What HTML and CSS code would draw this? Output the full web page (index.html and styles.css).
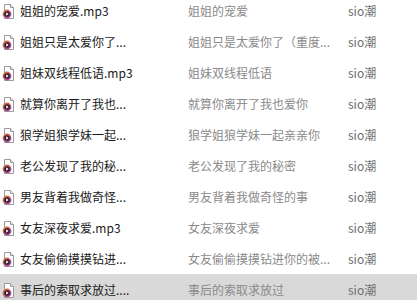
FILE: index.html
```html
<!DOCTYPE html>
<html>
<head>
    <meta charset="utf-8">
    <title>音频列表</title>
    <link rel="stylesheet" href="styles.css">
</head>
<body>
    <div class="list">
        <div class="row">
            <span class="icon"><svg width="16" height="16" viewBox="0 0 16 16"><use href="#audio"/></svg></span>
            <span class="name">姐姐的宠爱.mp3</span>
            <span class="desc">姐姐的宠爱</span>
            <span class="author">sio潮</span>
        </div>
        <div class="row">
            <span class="icon"><svg width="16" height="16" viewBox="0 0 16 16"><use href="#audio"/></svg></span>
            <span class="name">姐姐只是太爱你了...</span>
            <span class="desc">姐姐只是太爱你了（重度...</span>
            <span class="author">sio潮</span>
        </div>
        <div class="row">
            <span class="icon"><svg width="16" height="16" viewBox="0 0 16 16"><use href="#audio"/></svg></span>
            <span class="name">姐妹双线程低语.mp3</span>
            <span class="desc">姐妹双线程低语</span>
            <span class="author">sio潮</span>
        </div>
        <div class="row">
            <span class="icon"><svg width="16" height="16" viewBox="0 0 16 16"><use href="#audio"/></svg></span>
            <span class="name">就算你离开了我也...</span>
            <span class="desc">就算你离开了我也爱你</span>
            <span class="author">sio潮</span>
        </div>
        <div class="row">
            <span class="icon"><svg width="16" height="16" viewBox="0 0 16 16"><use href="#audio"/></svg></span>
            <span class="name">狼学姐狼学妹一起...</span>
            <span class="desc">狼学姐狼学妹一起亲亲你</span>
            <span class="author">sio潮</span>
        </div>
        <div class="row">
            <span class="icon"><svg width="16" height="16" viewBox="0 0 16 16"><use href="#audio"/></svg></span>
            <span class="name">老公发现了我的秘...</span>
            <span class="desc">老公发现了我的秘密</span>
            <span class="author">sio潮</span>
        </div>
        <div class="row">
            <span class="icon"><svg width="16" height="16" viewBox="0 0 16 16"><use href="#audio"/></svg></span>
            <span class="name">男友背着我做奇怪...</span>
            <span class="desc">男友背着我做奇怪的事</span>
            <span class="author">sio潮</span>
        </div>
        <div class="row">
            <span class="icon"><svg width="16" height="16" viewBox="0 0 16 16"><use href="#audio"/></svg></span>
            <span class="name">女友深夜求爱.mp3</span>
            <span class="desc">女友深夜求爱</span>
            <span class="author">sio潮</span>
        </div>
        <div class="row">
            <span class="icon"><svg width="16" height="16" viewBox="0 0 16 16"><use href="#audio"/></svg></span>
            <span class="name">女友偷偷摸摸钻进...</span>
            <span class="desc">女友偷偷摸摸钻进你的被...</span>
            <span class="author">sio潮</span>
        </div>
        <div class="row selected">
            <span class="icon"><svg width="16" height="16" viewBox="0 0 16 16"><use href="#audio"/></svg></span>
            <span class="name">事后的索取求放过....</span>
            <span class="desc">事后的索取求放过</span>
            <span class="author">sio潮</span>
        </div>
    </div>

    <!-- 音频文件图标 -->
    <svg width="0" height="0" style="position:absolute">
        <defs>
            <linearGradient id="ring" x1="0" y1="0" x2="1" y2="1">
                <stop offset="0" stop-color="#e8742a"/>
                <stop offset="1" stop-color="#9b3aa8"/>
            </linearGradient>
            <g id="audio">
                <path d="M4.5 1.5h6l3 3v11h-9z" fill="#fff" stroke="#9a9a9a"/>
                <path d="M10.5 1.5v3h3" fill="#e6e6e6" stroke="#9a9a9a"/>
                <circle cx="7" cy="11" r="3.6" fill="#2b1a2e" stroke="url(#ring)" stroke-width="1.6"/>
                <path d="M6.2 9.3v3.4l2.4-1.7z" fill="#fff"/>
            </g>
        </defs>
    </svg>
</body>
</html>
```

FILE: styles.css
```css
/* 基本样式 */
body {
    margin: 0;
    background-color: #fff;
    font-family: "Noto Sans CJK SC", "Microsoft YaHei", sans-serif;
    font-size: 12px;
    overflow: hidden;
}

/* 列表向上滚动了几像素 */
.list {
    margin-top: -5px;
}

.row {
    display: grid;
    grid-template-columns: 20px 168px 160px 1fr;
    align-items: center;
    height: 31px;
    line-height: 16px;
    white-space: nowrap;
}

.row.selected {
    background-color: #d9d9d9;
}

.icon {
    display: flex;
    padding-left: 0;
}

.name {
    color: #1a1a1a;
}

.desc {
    color: #8a8a8a;
}

.author {
    color: #6e6e6e;
}
```
